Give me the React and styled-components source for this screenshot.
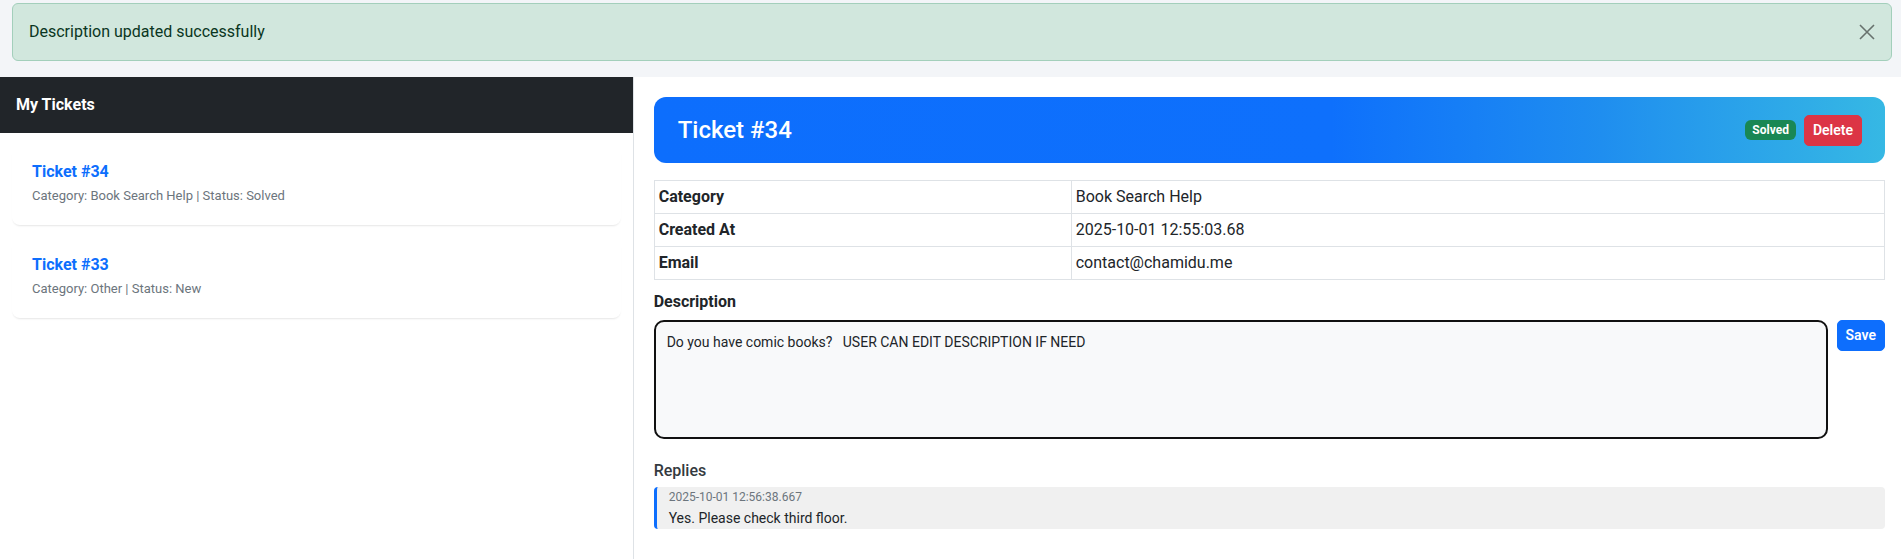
import React from "react";
import styled, { createGlobalStyle } from "styled-components";

const FONT = `Roboto, "Liberation Sans", Arial, sans-serif`;

const GlobalStyle = createGlobalStyle`
  * { box-sizing: border-box; }
  html, body { margin: 0; padding: 0; }
  body {
    background: #f3f5f8;
    font-family: ${FONT};
    font-size: 16px;
    line-height: 1.5;
    color: #212529;
  }
`;

const Page = styled.div`
  display: flex;
  flex-direction: column;
  min-height: 100vh;
`;

const Alert = styled.div`
  display: flex;
  align-items: center;
  justify-content: space-between;
  margin: 3px 9px 16px 12px;
  padding: 16px 16px;
  background: #d1e7dd;
  border: 1px solid #a3cfbb;
  border-radius: 6px;
  color: #0a3622;
  font-size: 16px;
  line-height: 24px;
`;

const CloseButton = styled.button`
  display: flex;
  align-items: center;
  justify-content: center;
  width: 24px;
  height: 24px;
  padding: 0;
  margin-right: -4px;
  border: 0;
  background: transparent;
  cursor: pointer;
  opacity: 0.5;
`;

const Layout = styled.div`
  flex: 1;
  display: grid;
  grid-template-columns: 1fr 2fr;
  background: #fff;
`;

const Sidebar = styled.aside`
  border-right: 1px solid #dee2e6;
  background: #fff;
`;

const SidebarHeader = styled.div`
  background: #212529;
  color: #fff;
  font-weight: 700;
  font-size: 16px;
  line-height: 24px;
  padding: 16px 16px 16px;
`;

const TicketList = styled.div`
  display: flex;
  flex-direction: column;
  gap: 14px;
  padding: 13px 12px 12px;
`;

const TicketCard = styled.div`
  background: #fff;
  border-radius: 8px;
  box-shadow: 0 2px 2px -1px rgba(0, 0, 0, 0.1);
  padding: 16px 20px 19px;
`;

const TicketLink = styled.a`
  display: block;
  color: #0d6efd;
  font-weight: 700;
  font-size: 16px;
  line-height: 19px;
  text-decoration: none;
  margin-bottom: 5px;
`;

const TicketMeta = styled.div`
  color: #6c757d;
  font-size: 13px;
  line-height: 20px;
`;

const Main = styled.main`
  padding: 20px 16px 20px 20px;
  display: flex;
  flex-direction: column;
`;

const TicketHeader = styled.div`
  display: flex;
  align-items: center;
  justify-content: space-between;
  height: 66px;
  padding: 0 23px 0 24px;
  border-radius: 12px;
  background: linear-gradient(90deg, #0d6efd 0%, #0e70fc 55%, #1f8eef 77%, #36b8e4 100%);
  color: #fff;
  margin-bottom: 17px;
`;

const TicketTitle = styled.h4`
  margin: 0;
  font-size: 24px;
  font-weight: 500;
  line-height: 1.2;
`;

const HeaderActions = styled.div`
  display: flex;
  align-items: center;
  gap: 8px;
`;

const Badge = styled.span`
  display: inline-block;
  background: #198754;
  color: #fff;
  font-size: 12px;
  font-weight: 700;
  line-height: 1;
  padding: 4px 7px;
  border-radius: 6px;
`;

const SmallButton = styled.button`
  font-family: ${FONT};
  font-size: 14px;
  font-weight: 600;
  line-height: 21px;
  padding: 4px 8px;
  border: 1px solid ${(p) => (p.$variant === "danger" ? "#dc3545" : "#0d6efd")};
  background: ${(p) => (p.$variant === "danger" ? "#dc3545" : "#0d6efd")};
  color: #fff;
  border-radius: 5px;
  cursor: pointer;
`;

const InfoTable = styled.table`
  width: 100%;
  border-collapse: collapse;
  margin-bottom: 10px;
  font-size: 16px;
  line-height: 24px;

  th, td {
    border: 1px solid #dee2e6;
    padding: 4px 4px;
    text-align: left;
    vertical-align: top;
  }
  th {
    width: 33.9%;
    font-weight: 700;
  }
  td {
    font-weight: 400;
  }
`;

const SectionLabel = styled.div`
  font-weight: ${(p) => (p.$muted ? 500 : 700)};
  color: ${(p) => (p.$muted ? "#343a40" : "#212529")};
  font-size: 16px;
  line-height: 24px;
  margin-top: ${(p) => p.$mt || 0}px;
  margin-bottom: ${(p) => p.$mb || 0}px;
`;

const DescRow = styled.div`
  display: flex;
  align-items: flex-start;
  gap: 9px;
`;

const DescArea = styled.textarea`
  flex: 1;
  height: 119px;
  resize: none;
  font-family: ${FONT};
  font-size: 14px;
  line-height: 21px;
  color: #212529;
  background: #f8f9fa;
  border: 2px solid #111;
  border-radius: 10px;
  padding: 10px 11px;
  outline: none;
  white-space: pre-wrap;
`;

const Reply = styled.div`
  background: #f0f0f0;
  border-left: 3px solid #0d6efd;
  border-radius: 4px;
  padding: 1px 12px 0;
`;

const ReplyDate = styled.div`
  color: #6c757d;
  font-size: 12px;
  line-height: 18px;
  margin-bottom: 2px;
`;

const ReplyText = styled.div`
  font-size: 14px;
  line-height: 21px;
  color: #212529;
`;

const tickets = [
  { id: 34, category: "Book Search Help", status: "Solved" },
  { id: 33, category: "Other", status: "New" },
];

export default function App() {
  return (
    <>
      <GlobalStyle />
      <Page>
        <Alert role="alert">
          <span>Description updated successfully</span>
          <CloseButton aria-label="Close">
            <svg width="16" height="16" viewBox="0 0 16 16" fill="none">
              <path d="M1 1 L15 15 M15 1 L1 15" stroke="#000" strokeWidth="1.6" />
            </svg>
          </CloseButton>
        </Alert>
        <Layout>
          <Sidebar>
            <SidebarHeader>My Tickets</SidebarHeader>
            <TicketList>
              {tickets.map((t) => (
                <TicketCard key={t.id}>
                  <TicketLink href="#">Ticket #{t.id}</TicketLink>
                  <TicketMeta>
                    Category: {t.category} | Status: {t.status}
                  </TicketMeta>
                </TicketCard>
              ))}
            </TicketList>
          </Sidebar>
          <Main>
            <TicketHeader>
              <TicketTitle>Ticket #34</TicketTitle>
              <HeaderActions>
                <Badge>Solved</Badge>
                <SmallButton $variant="danger">Delete</SmallButton>
              </HeaderActions>
            </TicketHeader>
            <InfoTable>
              <tbody>
                <tr>
                  <th>Category</th>
                  <td>Book Search Help</td>
                </tr>
                <tr>
                  <th>Created At</th>
                  <td>2025-10-01 12:55:03.68</td>
                </tr>
                <tr>
                  <th>Email</th>
                  <td>contact@chamidu.me</td>
                </tr>
              </tbody>
            </InfoTable>
            <SectionLabel $mb={6}>Description</SectionLabel>
            <DescRow>
              <DescArea defaultValue={"Do you have comic books?   USER CAN EDIT DESCRIPTION IF NEED"} />
              <SmallButton $variant="primary">Save</SmallButton>
            </DescRow>
            <SectionLabel $muted $mt={20} $mb={4}>
              Replies
            </SectionLabel>
            <Reply>
              <ReplyDate>2025-10-01 12:56:38.667</ReplyDate>
              <ReplyText>Yes. Please check third floor.</ReplyText>
            </Reply>
          </Main>
        </Layout>
      </Page>
    </>
  );
}
